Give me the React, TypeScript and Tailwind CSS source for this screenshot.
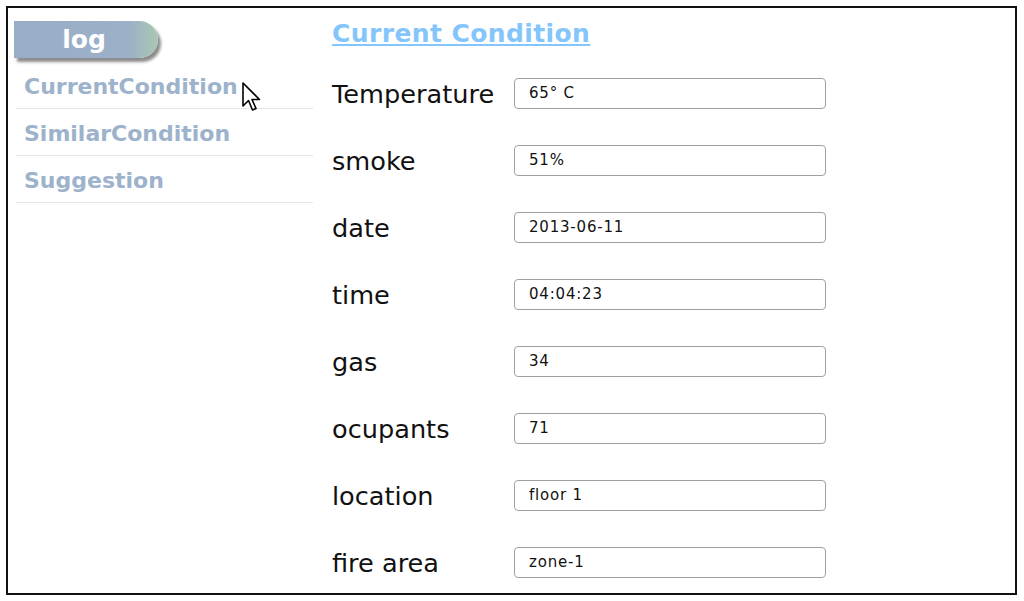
import React from 'react'

const rows = [
  { label: 'Temperature', value: '65° C' },
  { label: 'smoke', value: '51%' },
  { label: 'date', value: '2013-06-11' },
  { label: 'time', value: '04:04:23' },
  { label: 'gas', value: '34' },
  { label: 'ocupants', value: '71' },
  { label: 'location', value: 'floor 1' },
  { label: 'fire area', value: 'zone-1' },
]

const navItems = ['CurrentCondition', 'SimilarCondition', 'Suggestion']

const Pointer: React.FC = () => (
  <svg
    className="absolute left-[233px] top-[74px]"
    width="24"
    height="32"
    viewBox="0 0 24 32"
  >
    <path
      d="M2 1 L2 24 L7.5 18.5 L11.5 28 L15 26.5 L11 17.5 L18.5 17.5 Z"
      fill="#fff"
      stroke="#000"
      strokeWidth="1.6"
      strokeLinejoin="round"
    />
  </svg>
)

export default function App() {
  return (
    <div className="w-[1024px] h-[601px] bg-white p-[6px] font-['DejaVu_Sans',sans-serif]">
      <div className="relative flex w-[1011px] h-[589px] border-2 border-[#111]">
        {/* left menu */}
        <div className="w-[324px] shrink-0">
          <div className="ml-[6px] mt-[13px] mb-[4px] w-[144px] h-[37px] rounded-r-full bg-gradient-to-r from-[#98adc6] via-[#9cb1c8] via-80% to-[#a9c7b1] shadow-[3px_4px_3px_rgba(0,0,0,0.45)] flex items-center justify-center">
            <span className="text-white text-[25px] leading-none font-bold pr-[4px]">log</span>
          </div>
          <ul className="ml-[8px] w-[297px]">
            {navItems.map((item) => (
              <li
                key={item}
                className="pl-[8px] pt-[12px] pb-[8px] border-b border-[#e6e6e6] text-[22px] leading-[26px] font-bold text-[#9db2cb]"
              >
                {item}
              </li>
            ))}
          </ul>
          <Pointer />
        </div>

        {/* main form */}
        <div className="flex-1 pt-[11px]">
          <h1 className="h-[30px] text-[25px] leading-[30px] font-bold tracking-[0.4px] text-[#84c6fb] underline decoration-2 underline-offset-[2px]">
            Current Condition
          </h1>
          <div className="mt-[12px] flex flex-col">
            {rows.map((row) => (
              <div key={row.label} className="h-[67px] flex items-center">
                <span className="w-[182px] shrink-0 text-[25.6px] leading-none text-[#111]">
                  {row.label}
                </span>
                <input
                  readOnly
                  value={row.value}
                  className="w-[312px] h-[31px] -mt-[3px] rounded-[4px] border border-[#a0a0a0] bg-white pl-[14px] text-[15px] tracking-[0.8px] text-[#111] outline-none font-['DejaVu_Sans',sans-serif]"
                />
              </div>
            ))}
          </div>
        </div>
      </div>
    </div>
  )
}
